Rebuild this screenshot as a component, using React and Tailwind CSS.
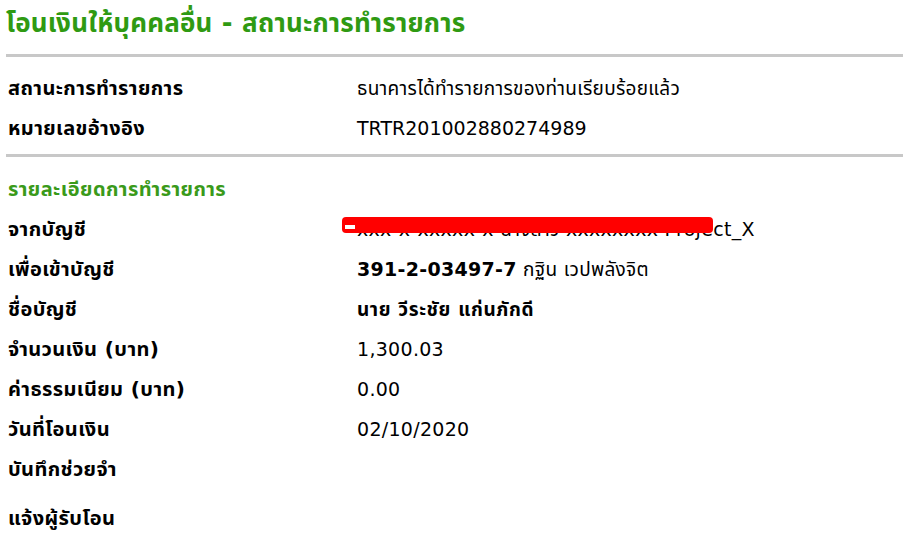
const rows = [
  { label: 'จากบัญชี', value: 'xxx-x-xxxxx-x นางสาว xxxxxxxx Project_X', masked: true },
  { label: 'เพื่อเข้าบัญชี', value: (<><span className="font-bold">391-2-03497-7</span> กฐิน เวปพลังจิต</>) },
  { label: 'ชื่อบัญชี', value: 'นาย วีระชัย แก่นภักดี', bold: true },
  { label: 'จำนวนเงิน (บาท)', value: '1,300.03' },
  { label: 'ค่าธรรมเนียม (บาท)', value: '0.00' },
  { label: 'วันที่โอนเงิน', value: '02/10/2020' },
  { label: 'บันทึกช่วยจำ', value: '' },
];

function Row({ label, children, className = '' }) {
  return (
    <div className={`grid grid-cols-[349px_1fr] items-center h-10 ${className}`}>
      <div className="font-bold text-[20px] tracking-[0.4px] text-black whitespace-nowrap">{label}</div>
      <div className="text-[19px] tracking-[0.3px] text-black whitespace-nowrap">{children}</div>
    </div>
  );
}

export default function App() {
  return (
    <div className="w-[903px] h-[534px] bg-white overflow-hidden font-['DejaVu_Sans','Noto_Sans_Thai','Noto_Sans',sans-serif]">
      {/* หัวเรื่อง */}
      <div className="pl-[6px] pt-[7px]">
        <h1 className="text-[26px] font-bold text-[#2f9a12] leading-[32px] tracking-[0.2px] whitespace-nowrap">โอนเงินให้บุคคลอื่น - สถานะการทำรายการ</h1>
        <div className="mt-[15px] h-[3px] bg-[#c8c8c8]" />
      </div>

      <div className="pl-[8px] pt-[11px]">
        <Row label="สถานะการทำรายการ">ธนาคารได้ทำรายการของท่านเรียบร้อยแล้ว</Row>
        <Row label="หมายเลขอ้างอิง">
          <span className="tracking-[0px]">TRTR201002880274989</span>
        </Row>
      </div>
      <div className="ml-[6px] mt-[6px] h-[3px] bg-[#c8c8c8]" />

      <div className="pl-[8px] pt-[12px]">
        <div className="h-[40px] flex items-center font-bold text-[20px] tracking-[0.4px] text-[#3a9a1a]">รายละเอียดการทำรายการ</div>
        {rows.map((r) => (
          <Row key={r.label} label={r.label}>
            {r.masked ? (
              <span className="relative inline-block">
                <span>{r.value}</span>
                <span className="absolute left-[-15px] top-[2px] w-[371px] h-[16px] bg-[#ff0000] rounded-sm" />
                <span className="absolute left-[-12px] top-[10px] w-[10px] h-[4px] bg-white" />
              </span>
            ) : r.bold ? (
              <span className="font-bold tracking-[0.6px]">{r.value}</span>
            ) : (
              r.value
            )}
          </Row>
        ))}
        <Row label="แจ้งผู้รับโอน" className="mt-[9px]" />
      </div>
    </div>
  );
}
